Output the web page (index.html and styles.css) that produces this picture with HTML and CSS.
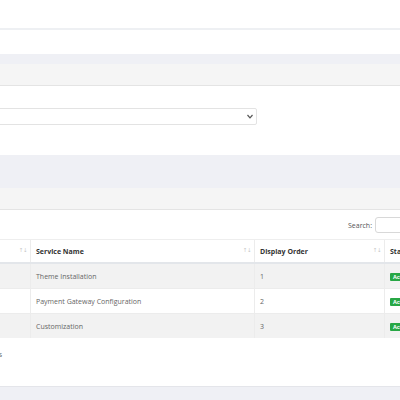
FILE: index.html
```html
<!DOCTYPE html>
<html lang="en">
<head>
  <meta charset="UTF-8">
  <meta name="viewport" content="width=device-width, initial-scale=1.0">
  <title>services</title>
  <link rel="stylesheet" href="styles.css">
</head>
<body>
  <div class="topbar"></div>
  <div class="page">
    <div class="card">
      <div class="card-header"></div>
      <div class="card-body filter-body">
        <div class="select-box">
          <svg width="6" height="5" viewBox="0 0 6 5"><path d="M0.5 1 L3 3.8 L5.5 1" fill="none" stroke="#555" stroke-width="1.2"/></svg>
        </div>
      </div>
    </div>

    <div class="card list-card">
      <div class="card-header"></div>
      <div class="card-body">
        <div class="search-row">
          <label>Search:</label>
          <input type="text">
        </div>
        <table class="data-table">
          <thead>
            <tr>
              <th class="col-id"><span class="sort">↑↓</span></th>
              <th class="col-name">Service Name<span class="sort">↑↓</span></th>
              <th class="col-order">Display Order<span class="sort">↑↓</span></th>
              <th>Status<span class="sort">↑↓</span></th>
            </tr>
          </thead>
          <tbody>
            <tr class="odd">
              <td></td>
              <td>Theme Installation</td>
              <td>1</td>
              <td><span class="badge">Active</span></td>
            </tr>
            <tr>
              <td></td>
              <td>Payment Gateway Configuration</td>
              <td>2</td>
              <td><span class="badge">Active</span></td>
            </tr>
            <tr class="odd">
              <td></td>
              <td>Customization</td>
              <td>3</td>
              <td><span class="badge">Active</span></td>
            </tr>
          </tbody>
        </table>
        <div class="table-info">Showing 1 to 3 of 3 entries</div>
      </div>
    </div>
  </div>
</body>
</html>
```

FILE: styles.css
```css
body {
  margin: 0;
  padding: 0;
  width: 400px;
  height: 400px;
  overflow: hidden;

  font-family: "Open Sans", "Liberation Sans", sans-serif;
  font-size: 7px;
  color: #666;
  background-color: #fff;
}

.topbar {
  height: 28px;
  border-bottom: 2px solid #eef0f3;
}

.page {
  margin-top: 24px;
  padding: 10px 0 20px 0;
  background-color: #eff0f5;
}

/* the cards run off the left and right edge of the shot */
.card {
  width: 600px;
  margin-left: -100px;
  background-color: #fff;
}
.list-card {
  margin-top: 33px;
  border-bottom: 1px solid #e4e5ea;
}

.card-header {
  height: 21px;
  background-color: #f5f5f5;
  border-bottom: 1px solid #e4e4e4;
}

.filter-body {
  padding: 22px 0 30px 0;
}

.select-box {
  width: 352px;
  height: 15px;
  display: flex;
  align-items: center;
  justify-content: flex-end;
  padding-right: 3px;

  border: 1px solid #e3e3e3;
  border-radius: 2px;
}

.search-row {
  display: flex;
  align-items: center;
  justify-content: flex-end;
  gap: 3px;
  padding: 7px 25px 0 0;
  margin-bottom: 6px;
}
.search-row label {
  color: #555;
}
.search-row input {
  width: 100px;
  height: 16px;
  box-sizing: border-box;
  margin: 0;
  border: 1px solid #d8d8d8;
  border-radius: 3px;
  outline: none;
}

.data-table {
  width: 600px;
  border-collapse: collapse;
  table-layout: fixed;
}
.data-table th,
.data-table td {
  border-left: 1px solid #ececec;
  text-align: left;
  padding: 0 5px;
}
.data-table th:first-child,
.data-table td:first-child {
  border-left: none;
}
.data-table th {
  position: relative;
  height: 22px;
  font-weight: 700;
  color: #333;
  border-top: 1px solid #eeeeee;
  border-bottom: 2px solid #e3e6ea;
}
.col-id { width: 120px; }
.col-name { width: 213px; }
.col-order { width: 119px; }

.sort {
  position: absolute;
  right: 3px;
  top: 7px;
  font-family: "DejaVu Sans", sans-serif;
  font-size: 5.5px;
  font-weight: 400;
  color: #c4c4c4;
  letter-spacing: -0.5px;
}

.data-table td {
  height: 24px;
  border-top: 1px solid #ececec;
}
.data-table tr.odd td {
  background-color: #f2f2f2;
}

.badge {
  display: inline-block;
  padding: 0 3px;
  line-height: 8px;
  font-size: 5.5px;
  font-weight: 700;
  color: #fff;
  background-color: #28a745;
  border-radius: 1px;
}

.table-info {
  width: 102px;
  text-align: right;
  padding: 12px 0 27px 0;
}
```
